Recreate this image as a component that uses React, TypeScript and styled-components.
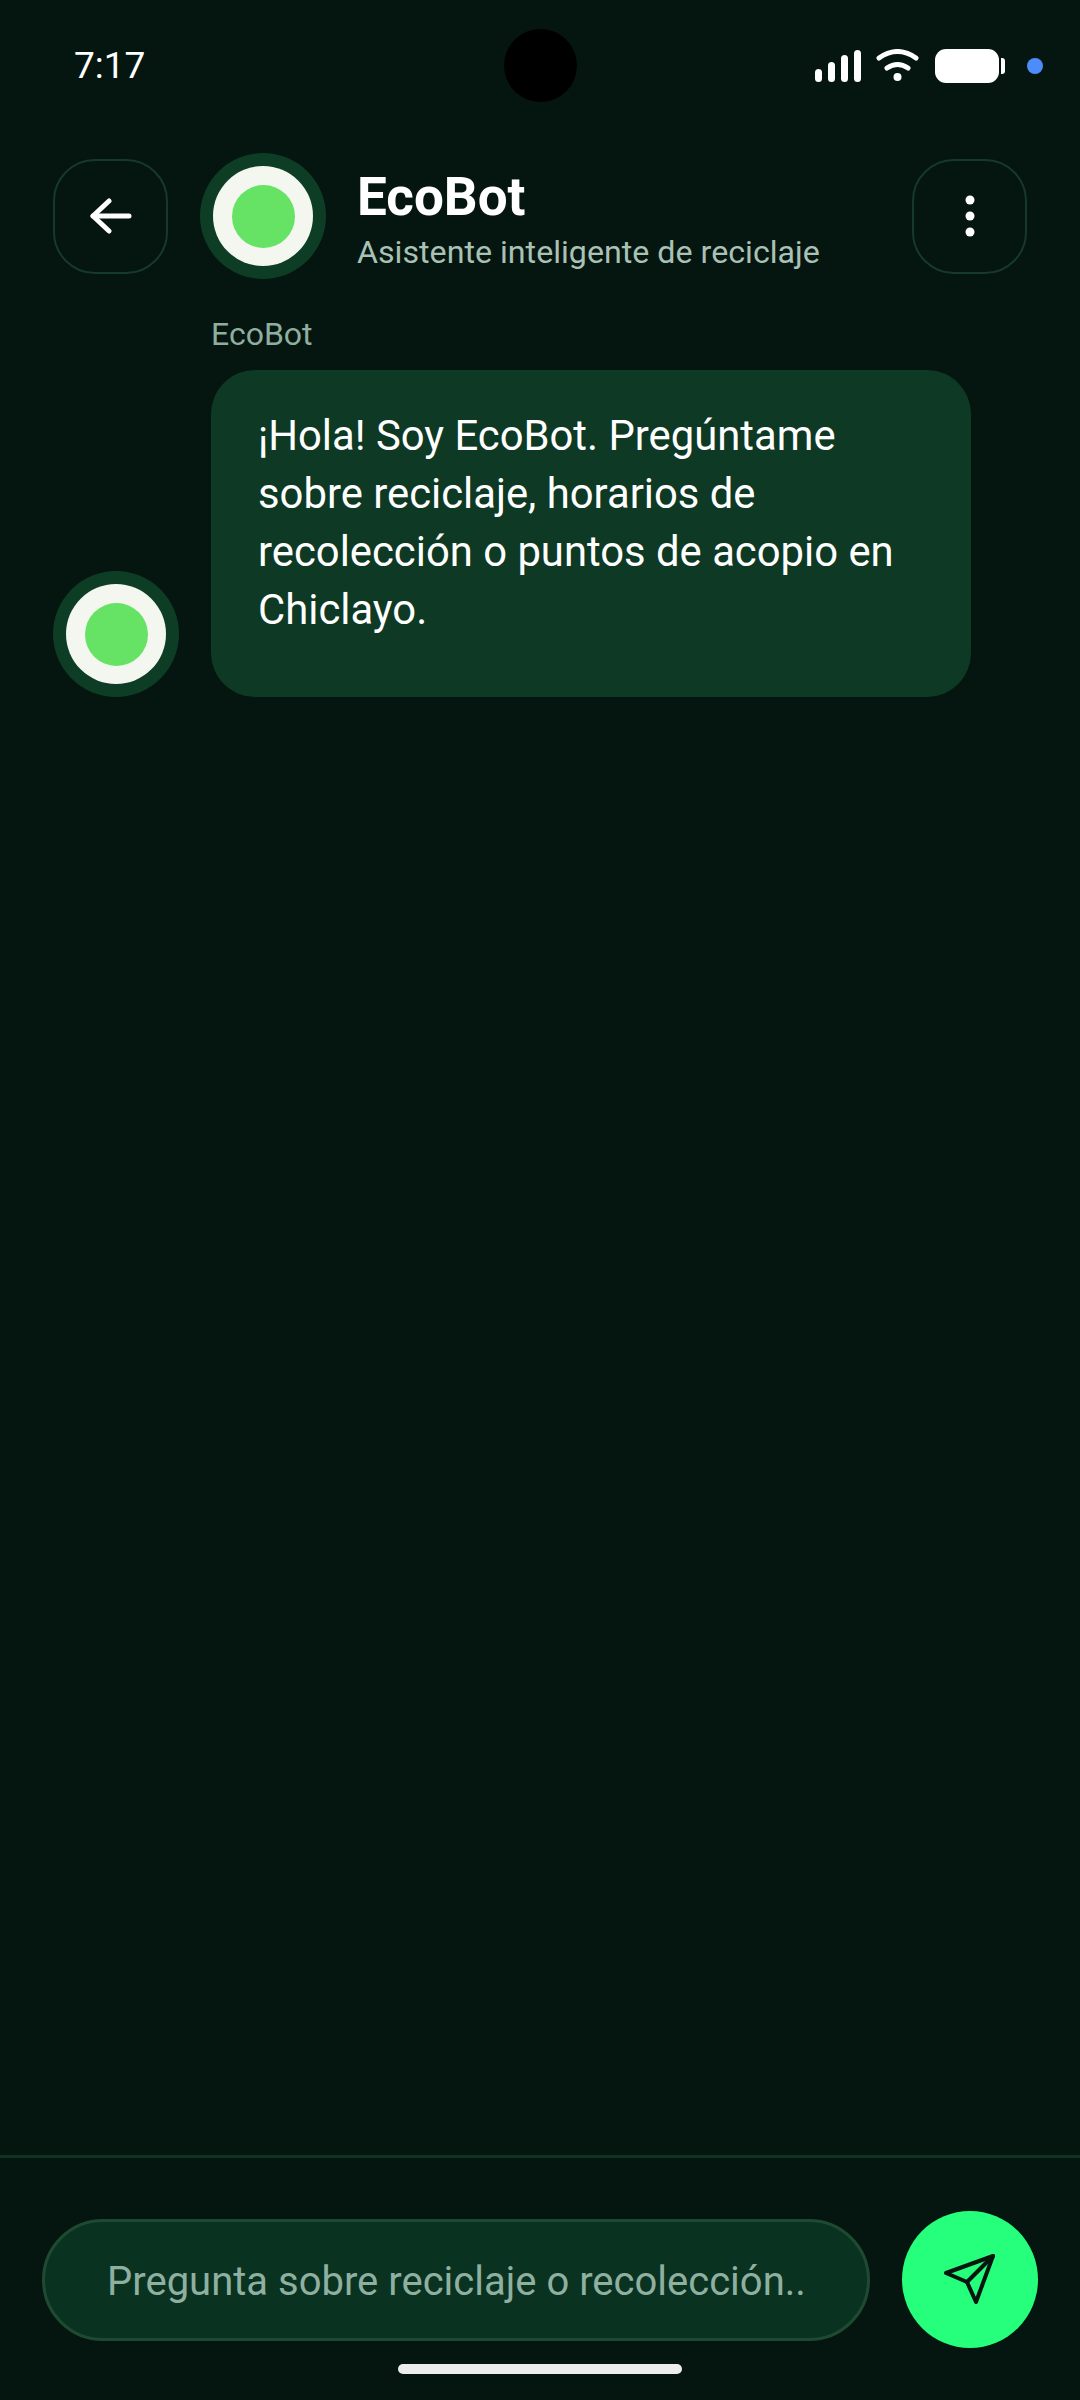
import React from 'react';
import styled, { createGlobalStyle } from 'styled-components';

const GlobalStyle = createGlobalStyle`
    html, body {
        margin: 0;
        padding: 0;
        background: #05150f;
    }
    * {
        box-sizing: border-box;
    }
`

const Page = styled.div`
    width: 1080px;
    height: 2400px;
    display: flex;
    flex-direction: column;
    background: #05150f;
    color: #ffffff;
    font-family: Roboto, "Liberation Sans", sans-serif;
    overflow: hidden;
`

const StatusBar = styled.div`
    display: grid;
    grid-template-columns: 1fr 73px 1fr;
    align-items: center;
    height: 73px;
    margin-top: 29px;
`

const Time = styled.span`
    padding-left: 74px;
    font-size: 37px;
    line-height: 73px;
`

const Camera = styled.div`
    width: 73px;
    height: 73px;
    border-radius: 50%;
    background: #000000;
`

const StatusIcons = styled.div`
    display: flex;
    align-items: center;
    justify-content: flex-end;
    padding-right: 37px;
`

const Signal = styled.div`
    display: flex;
    align-items: flex-end;
    gap: 6px;
    height: 32px;
    margin-right: 15px;
`

const SignalBar = styled.div<{ $h: number }>`
    width: 7px;
    height: ${p => p.$h}px;
    border-radius: 4px;
    background: #ffffff;
`

const Battery = styled.div`
    width: 64px;
    height: 34px;
    margin-left: 15px;
    border-radius: 11px;
    background: #ffffff;
`

const BatteryCap = styled.div`
    width: 4px;
    height: 16px;
    margin-left: 2px;
    border-radius: 0 3px 3px 0;
    background: #ffffff;
`

const Dot = styled.div`
    width: 16px;
    height: 16px;
    margin-left: 22px;
    border-radius: 50%;
    background: #4d8dfb;
`

const Header = styled.header`
    display: flex;
    align-items: center;
    gap: 32px;
    margin-top: 51px;
    padding: 0 53px;
`

const IconButton = styled.button`
    display: flex;
    align-items: center;
    justify-content: center;
    flex: none;
    width: 115px;
    height: 115px;
    padding: 0;
    border: 2.5px solid #16392a;
    border-radius: 42px;
    background: transparent;
`

const Avatar = styled.div`
    display: flex;
    align-items: center;
    justify-content: center;
    flex: none;
    width: 126px;
    height: 126px;
    border-radius: 50%;
    background: #0e3d26;
`

const AvatarFace = styled.div`
    display: flex;
    align-items: center;
    justify-content: center;
    width: 100px;
    height: 100px;
    border-radius: 50%;
    background: #f3f7f0;
`

const AvatarCore = styled.div`
    width: 63px;
    height: 63px;
    border-radius: 50%;
    background: #66e264;
`

const HeaderText = styled.div`
    flex: 1;
    display: flex;
    flex-direction: column;
    margin-left: -1px;
    padding-top: 12px;
`

const Title = styled.h1`
    margin: 0;
    font-size: 53px;
    font-weight: 700;
    line-height: 60px;
`

const Subtitle = styled.p`
    margin: 0;
    font-size: 32.2px;
    line-height: 50px;
    color: #a9c2b5;
`

const Main = styled.main`
    flex: 1;
    padding: 35px 53px 0;
`

const MessageRow = styled.div`
    display: flex;
    align-items: flex-end;
    gap: 32px;
`

const MessageColumn = styled.div`
    display: flex;
    flex-direction: column;
    width: 760px;
`

const Sender = styled.span`
    font-size: 32px;
    line-height: 40px;
    margin-bottom: 16px;
    color: #8fae9f;
`

const Bubble = styled.div`
    padding: 37px 47px 58px;
    border-radius: 44px;
    background: #0e3924;
    font-size: 41.8px;
    line-height: 58px;
`

const Footer = styled.footer`
    border-top: 3px solid #0f3322;
    padding: 53px 42px 26px;
`

const InputRow = styled.div`
    display: flex;
    align-items: center;
    gap: 32px;
`

const InputBox = styled.div`
    flex: 1;
    height: 122px;
    display: flex;
    align-items: center;
    padding: 3px 0 0 62px;
    border: 3px solid #1e4a33;
    border-radius: 61px;
    background: #0a3220;
    font-size: 40px;
    color: #8fb0a0;
`

const SendButton = styled.button`
    display: flex;
    align-items: center;
    justify-content: center;
    flex: none;
    width: 136px;
    height: 137px;
    padding: 0;
    border: none;
    border-radius: 50%;
    background: #25ff7b;
`

const HomeBar = styled.div`
    width: 284px;
    height: 10px;
    margin: 16px auto 0;
    border-radius: 5px;
    background: #ededed;
`

const BotAvatar = () => (
    <Avatar>
        <AvatarFace>
            <AvatarCore />
        </AvatarFace>
    </Avatar>
)

const App = () => {
    return (
        <Page>
            <GlobalStyle />

            <StatusBar>
                <Time>7:17</Time>
                <Camera />
                <StatusIcons>
                    <Signal>
                        <SignalBar $h={13} />
                        <SignalBar $h={20} />
                        <SignalBar $h={27} />
                        <SignalBar $h={32} />
                    </Signal>
                    <svg width="44" height="34" viewBox="0 0 44 34" fill="none" stroke="#fff" strokeWidth="5" strokeLinecap="round">
                        <path d="M3 9Q21.5 -4 40 9" />
                        <path d="M11 19Q21.5 12 32 19" />
                        <circle cx="21.5" cy="28" r="4" fill="#fff" stroke="none" />
                    </svg>
                    <Battery />
                    <BatteryCap />
                    <Dot />
                </StatusIcons>
            </StatusBar>

            <Header>
                <IconButton>
                    <svg width="42" height="36" viewBox="0 0 42 36" fill="none" stroke="#fff" strokeWidth="5" strokeLinecap="round" strokeLinejoin="round">
                        <path d="M19 3L3 18L19 33" />
                        <path d="M3 18H39" />
                    </svg>
                </IconButton>
                <BotAvatar />
                <HeaderText>
                    <Title>EcoBot</Title>
                    <Subtitle>Asistente inteligente de reciclaje</Subtitle>
                </HeaderText>
                <IconButton>
                    <svg width="10" height="42" viewBox="0 0 10 42" fill="#fff">
                        <circle cx="5" cy="5" r="4.5" />
                        <circle cx="5" cy="21" r="4.5" />
                        <circle cx="5" cy="37" r="4.5" />
                    </svg>
                </IconButton>
            </Header>

            <Main>
                <MessageRow>
                    <BotAvatar />
                    <MessageColumn>
                        <Sender>EcoBot</Sender>
                        <Bubble>¡Hola! Soy EcoBot. Pregúntame sobre reciclaje, horarios de recolección o puntos de acopio en Chiclayo.</Bubble>
                    </MessageColumn>
                </MessageRow>
            </Main>

            <Footer>
                <InputRow>
                    <InputBox>Pregunta sobre reciclaje o recolección..</InputBox>
                    <SendButton>
                        <svg width="60" height="60" viewBox="0 0 60 60" fill="none" stroke="#06160f" strokeWidth="4" strokeLinejoin="round" strokeLinecap="round">
                            <path d="M53 6L6 23L27 32L36 52Z" />
                            <path d="M27 32L53 6" />
                        </svg>
                    </SendButton>
                </InputRow>
                <HomeBar />
            </Footer>
        </Page>
    )
}

export default App;
